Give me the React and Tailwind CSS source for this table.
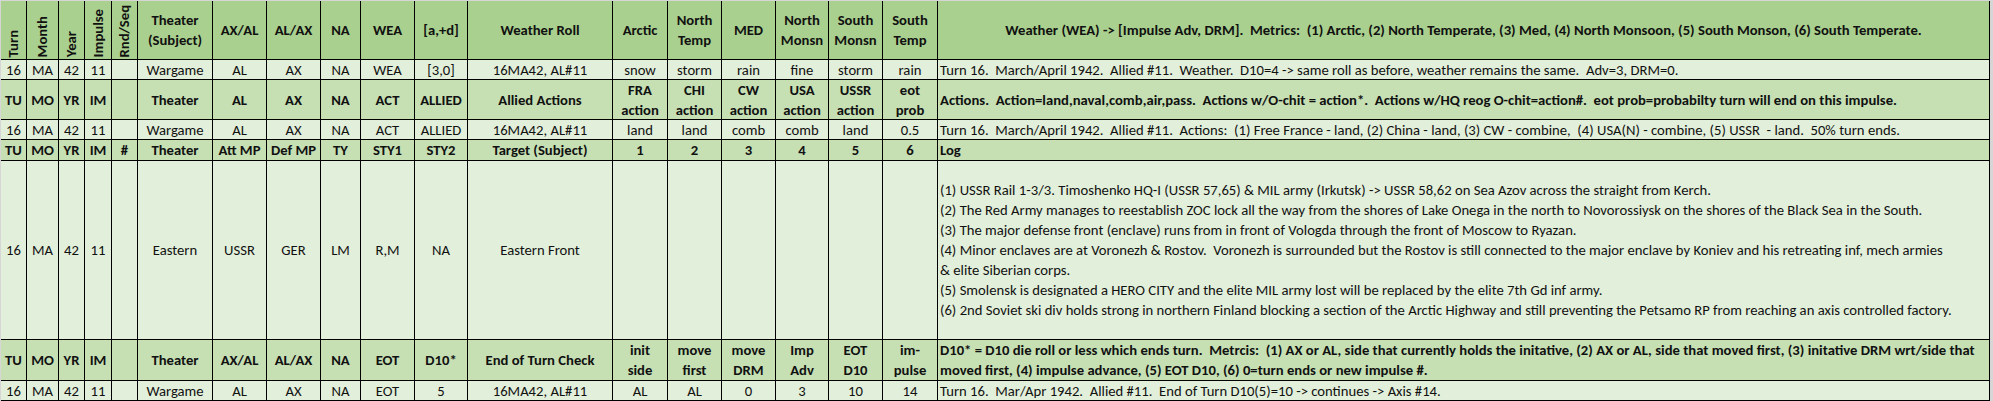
// Game log spreadsheet: weather, actions, combat and end-of-turn rows

const HEAD_DARK = 'bg-[#a9d08e] font-bold';
const HEAD_LIGHT = 'bg-[#c6e0b4] font-bold';
const DATA = 'bg-[#e2efda]';

const rows = [
  {
    kind: HEAD_DARK,
    vertical: true,
    cells: ['Turn', 'Month', 'Year', 'Impulse', 'Rnd/Seq', 'Theater\n(Subject)', 'AX/AL', 'AL/AX', 'NA', 'WEA', '[a,+d]', 'Weather Roll', 'Arctic', 'North\nTemp', 'MED', 'North\nMonsn', 'South\nMonsn', 'South\nTemp'],
    log: 'Weather (WEA) -> [Impulse Adv, DRM].  Metrics:  (1) Arctic, (2) North Temperate, (3) Med, (4) North Monsoon, (5) South Monson, (6) South Temperate.',
    logAlign: 'center',
  },
  {
    kind: DATA,
    cells: ['16', 'MA', '42', '11', '', 'Wargame', 'AL', 'AX', 'NA', 'WEA', '[3,0]', '16MA42, AL#11', 'snow', 'storm', 'rain', 'fine', 'storm', 'rain'],
    log: 'Turn 16.  March/April 1942.  Allied #11.  Weather.  D10=4 -> same roll as before, weather remains the same.  Adv=3, DRM=0.',
  },
  {
    kind: HEAD_LIGHT,
    cells: ['TU', 'MO', 'YR', 'IM', '', 'Theater', 'AL', 'AX', 'NA', 'ACT', 'ALLIED', 'Allied Actions', 'FRA\naction', 'CHI\naction', 'CW\naction', 'USA\naction', 'USSR\naction', 'eot\nprob'],
    log: 'Actions.  Action=land,naval,comb,air,pass.  Actions w/O-chit = action*.  Actions w/HQ reog O-chit=action#.  eot prob=probabilty turn will end on this impulse.',
  },
  {
    kind: DATA,
    cells: ['16', 'MA', '42', '11', '', 'Wargame', 'AL', 'AX', 'NA', 'ACT', 'ALLIED', '16MA42, AL#11', 'land', 'land', 'comb', 'comb', 'land', '0.5'],
    log: 'Turn 16.  March/April 1942.  Allied #11.  Actions:  (1) Free France - land, (2) China - land, (3) CW - combine,  (4) USA(N) - combine, (5) USSR  - land.  50% turn ends.',
  },
  {
    kind: HEAD_LIGHT,
    cells: ['TU', 'MO', 'YR', 'IM', '#', 'Theater', 'Att MP', 'Def MP', 'TY', 'STY1', 'STY2', 'Target (Subject)', '1', '2', '3', '4', '5', '6'],
    log: 'Log',
  },
  {
    kind: DATA,
    cells: ['16', 'MA', '42', '11', '', 'Eastern', 'USSR', 'GER', 'LM', 'R,M', 'NA', 'Eastern Front', '', '', '', '', '', ''],
    log: [
      '(1) USSR Rail 1-3/3. Timoshenko HQ-I (USSR 57,65) & MIL army (Irkutsk) -> USSR 58,62 on Sea Azov across the straight from Kerch.',
      '(2) The Red Army manages to reestablish ZOC lock all the way from the shores of Lake Onega in the north to Novorossiysk on the shores of the Black Sea in the South.',
      '(3) The major defense front (enclave) runs from in front of Vologda through the front of Moscow to Ryazan.',
      '(4) Minor enclaves are at Voronezh & Rostov.  Voronezh is surrounded but the Rostov is still connected to the major enclave by Koniev and his retreating inf, mech armies',
      '& elite Siberian corps.',
      '(5) Smolensk is designated a HERO CITY and the elite MIL army lost will be replaced by the elite 7th Gd inf army.',
      '(6) 2nd Soviet ski div holds strong in northern Finland blocking a section of the Arctic Highway and still preventing the Petsamo RP from reaching an axis controlled factory.',
    ],
  },
  {
    kind: HEAD_LIGHT,
    cells: ['TU', 'MO', 'YR', 'IM', '', 'Theater', 'AX/AL', 'AL/AX', 'NA', 'EOT', 'D10*', 'End of Turn Check', 'init\nside', 'move\nfirst', 'move\nDRM', 'Imp\nAdv', 'EOT\nD10', 'im-\npulse'],
    log: [
      'D10* = D10 die roll or less which ends turn.  Metrcis:  (1) AX or AL, side that currently holds the initative, (2) AX or AL, side that moved first, (3) initative DRM wrt/side that',
      'moved first, (4) impulse advance, (5) EOT D10, (6) 0=turn ends or new impulse #.',
    ],
  },
  {
    kind: DATA,
    cells: ['16', 'MA', '42', '11', '', 'Wargame', 'AL', 'AX', 'NA', 'EOT', '5', '16MA42, AL#11', 'AL', 'AL', '0', '3', '10', '14'],
    log: 'Turn 16.  Mar/Apr 1942.  Allied #11.  End of Turn D10(5)=10 -> continues -> Axis #14.',
  },
];

function Cell({ kind, children, className = '' }) {
  return (
    <div className={`${kind} border-r border-b border-black flex items-center justify-center text-center whitespace-pre-line leading-[20px] overflow-hidden ${className}`}>
      {children}
    </div>
  );
}

function LogCell({ kind, text, align }) {
  const lines = Array.isArray(text) ? text : [text];
  return (
    <div className={`${kind} border-r border-b border-black flex flex-col justify-center leading-[20px] overflow-hidden px-[2px] ${align === 'center' ? 'items-center' : 'items-start'}`}>
      {lines.map((line, i) => (
        <div key={i} className="whitespace-pre">{line}</div>
      ))}
    </div>
  );
}

export default function App() {
  return (
    <div className="w-[1993px] h-[401px] bg-[#d6d6d6] pl-[1px] pt-[1px] text-[14.67px] text-[#111] font-['Carlito','Lato','Liberation_Sans',sans-serif]">
      <div className="grid grid-cols-[26px_32px_26px_27px_26px_75px_54px_54px_40px_54px_53px_145px_55px_54px_54px_53px_54px_55px_1052px] grid-rows-[59px_20px_40px_20px_21px_179px_41px_20px] w-[1989px]">
        {rows.map((row, r) => (
          <div key={r} className="contents">
            {row.cells.map((c, i) =>
              row.vertical && i < 5 ? (
                <Cell key={i} kind={row.kind} className="!items-end pb-[2px]">
                  <span className="[writing-mode:vertical-rl] rotate-180 leading-none">{c}</span>
                </Cell>
              ) : (
                <Cell key={i} kind={row.kind}>{c}</Cell>
              )
            )}
            <LogCell kind={row.kind} text={row.log} align={row.logAlign} />
          </div>
        ))}
      </div>
    </div>
  );
}
